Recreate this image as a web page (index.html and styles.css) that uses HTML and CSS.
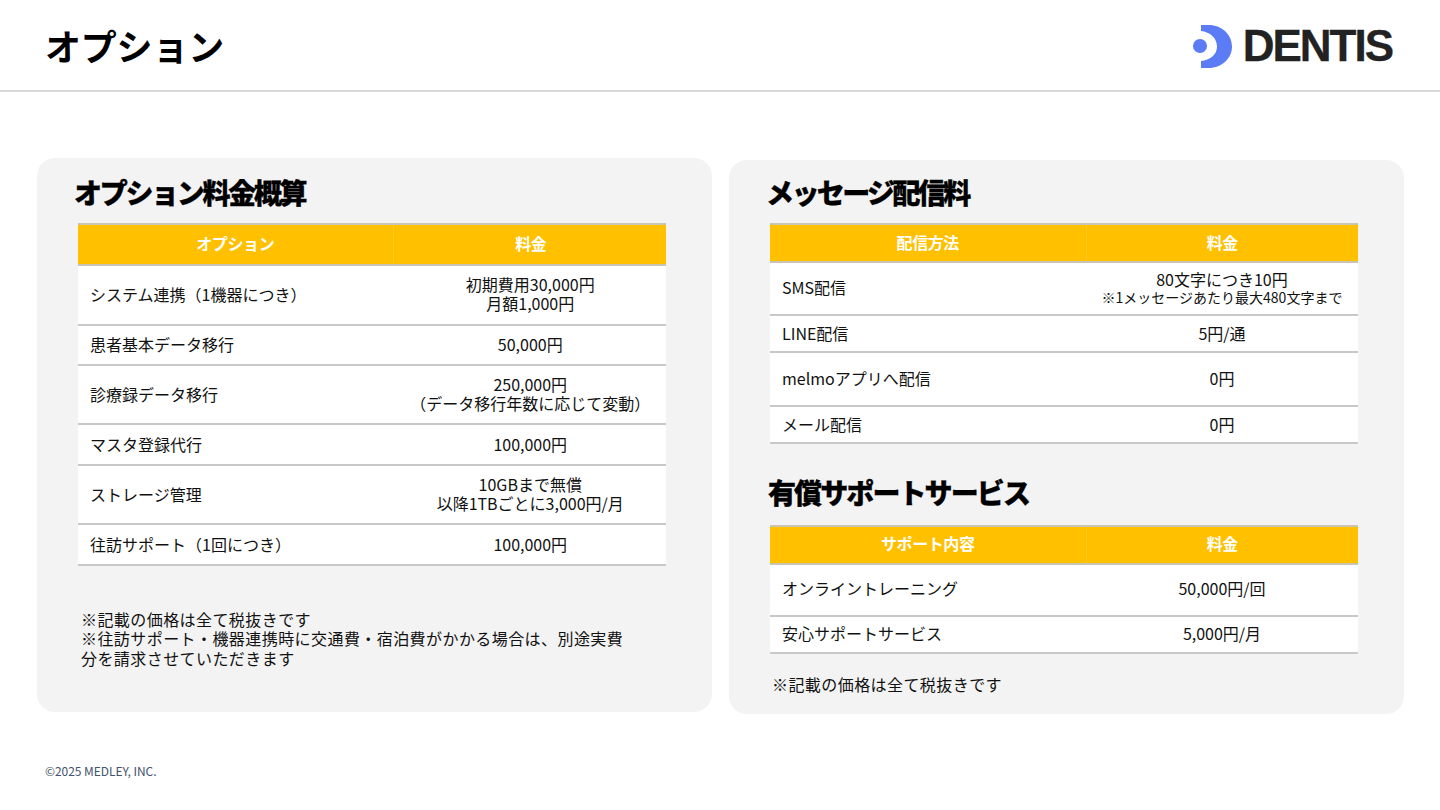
FILE: index.html
```html
<!DOCTYPE html>
<html lang="ja">
<head>
<meta charset="utf-8">
<title>オプション</title>
<link rel="stylesheet" href="styles.css">
</head>
<body>
<header class="top">
  <h1 class="page-title">オプション</h1>
  <div class="logo">
    <svg class="logo-mark" viewBox="0 0 42 44" width="42" height="44" aria-hidden="true">
      <circle cx="8" cy="22" r="7" fill="#5b7cf5"/>
      <path d="M9 1H17C29 1 40 10 40 22.500C40 35 29 44 17 44H9V37C18 36 25 31 25 22.500C25 14 18 8 9 7Z" fill="#5b7cf5"/>
    </svg>
    <span class="logo-text">DENTIS</span>
  </div>
</header>
<main class="panels">
  <section class="panel panel-left">
    <h2 class="panel-title title-left">オプション料金概算</h2>
    <table class="price price-left">
      <thead><tr class="h41"><th class="c1">オプション</th><th class="hc2">料金</th></tr></thead>
      <tbody>
        <tr class="h60"><td class="c1">システム連携（1機器につき）</td><td class="c2 two">初期費用30,000円<br>月額1,000円</td></tr>
        <tr class="h40"><td class="c1">患者基本データ移行</td><td class="c2">50,000円</td></tr>
        <tr class="h59"><td class="c1">診療録データ移行</td><td class="c2 two low">250,000円<br>（データ移行年数に応じて変動）</td></tr>
        <tr class="h41"><td class="c1">マスタ登録代行</td><td class="c2">100,000円</td></tr>
        <tr class="h59"><td class="c1">ストレージ管理</td><td class="c2 two low">10GBまで無償<br>以降1TBごとに3,000円/月</td></tr>
        <tr class="h41"><td class="c1">往訪サポート（1回につき）</td><td class="c2">100,000円</td></tr>
      </tbody>
    </table>
    <p class="note note-left">※記載の価格は全て税抜きです<br>※往訪サポート・機器連携時に交通費・宿泊費がかかる場合は、別途実費<br>分を請求させていただきます</p>
  </section>
  <section class="panel panel-right">
    <h2 class="panel-title title-right">メッセージ配信料</h2>
    <table class="price price-right">
      <thead><tr class="h38"><th class="c1r">配信方法</th><th class="hc2">料金</th></tr></thead>
      <tbody>
        <tr class="h53 sms"><td class="c1r">SMS配信</td><td class="c2">80文字につき10円<span class="small">※1メッセージあたり最大480文字まで</span></td></tr>
        <tr class="h37"><td class="c1r">LINE配信</td><td class="c2">5円/通</td></tr>
        <tr class="h54"><td class="c1r">melmoアプリへ配信</td><td class="c2">0円</td></tr>
        <tr class="h37"><td class="c1r">メール配信</td><td class="c2">0円</td></tr>
      </tbody>
    </table>
    <h2 class="panel-title title-second">有償サポートサービス</h2>
    <table class="price price-right second">
      <thead><tr class="h38"><th class="c1r">サポート内容</th><th class="hc2">料金</th></tr></thead>
      <tbody>
        <tr class="h52"><td class="c1r">オンライントレーニング</td><td class="c2">50,000円/回</td></tr>
        <tr class="h37"><td class="c1r">安心サポートサービス</td><td class="c2">5,000円/月</td></tr>
      </tbody>
    </table>
    <p class="note note-right">※記載の価格は全て税抜きです</p>
  </section>
</main>
<footer class="foot">©2025 MEDLEY, INC.</footer>
</body>
</html>
```
FILE: styles.css
```css
* { box-sizing: border-box; }
html, body { margin: 0; padding: 0; }
body {
  width: 1440px;
  height: 810px;
  overflow: hidden;
  background: #fff;
  color: #111;
  font-family: "Noto Sans CJK JP", "Noto Sans", sans-serif;
}
.top {
  height: 92px;
  border-bottom: 2px solid #d9d9d9;
  display: flex;
  align-items: flex-start;
  justify-content: space-between;
  padding: 0 48px 0 45px;
}
.page-title {
  margin: 19px 0 0;
  font-size: 36px;
  line-height: 52px;
  font-weight: 700;
  letter-spacing: -0.2px;
  color: #000;
}
.logo {
  display: flex;
  align-items: flex-start;
  margin: 24px 0 0;
}
.logo-mark { margin-right: 9px; }
.logo-text {
  font-family: "Liberation Sans", "Inter", sans-serif;
  font-weight: 700;
  font-size: 44px;
  line-height: 44px;
  letter-spacing: -2px;
  -webkit-text-stroke: 0.3px #222;
  color: #222;
}
.panels {
  display: flex;
  align-items: flex-start;
  gap: 17px;
  padding: 66px 36px 0 37px;
}
.panel {
  width: 675px;
  height: 554px;
  background: #f3f3f3;
  border-radius: 18px;
}
.panel-left { padding: 14px 46px 0 41px; }
.panel-right { margin-top: 2px; padding: 12px 46px 0 41px; }
.panel-title {
  margin: 0;
  font-size: 28px;
  line-height: 40px;
  font-weight: 900;
  color: #000;
  letter-spacing: -2.3px;
  -webkit-text-stroke: 0.3px #000;
}
.title-left { margin-left: -4px; }
.title-right { margin-left: -4px; letter-spacing: -2.6px; }
.title-second { margin: 28px 0 0 -2px; letter-spacing: -1.9px; }
.price {
  border-collapse: collapse;
  table-layout: fixed;
  background: #fff;
  margin-top: 11px;
  width: 588px;
  font-size: 16px;
  line-height: 20px;
}
.price.second { margin-top: 13px; }
.price th {
  background: #ffc000;
  color: #fff;
  font-weight: 700;
  font-size: 16px;
  letter-spacing: -0.4px;
  padding: 0 0 2px;
  border-top: 2px solid #c9c5b4;
  border-bottom: 2px solid #c9c5b4;
}
.price-left th, .second th { padding-bottom: 4px; }
.price .hc2 { border-left: 1px solid #ffc720; }
.price-left .hc2 { padding-left: 2px; }
.price td {
  padding: 0 0 2px;
  border-bottom: 2px solid #c8c8c8;
  font-weight: 400;
}
.price .sms td { padding-bottom: 4px; }
.second td { padding-bottom: 4px; }
.c1 { width: 315px; padding-left: 12px !important; }
.c1r { width: 316px; padding-left: 12px !important; }
.price th.c1, .price th.c1r { padding-left: 0 !important; }
.price td.c2 { text-align: center; }
.price-left td.c2 { padding-left: 1.5px; }
.price td.two { line-height: 19px; padding-bottom: 3px; }
.price td.low { padding-bottom: 1px; }
.small { display: block; font-size: 14px; line-height: 15px; margin-top: 1px; }
.h38 { height: 38px; }
.h37 { height: 37px; }
.h40 { height: 40px; }
.h41 { height: 41px; }
.h52 { height: 52px; }
.h53 { height: 53px; }
.h54 { height: 54px; }
.h59 { height: 59px; }
.h60 { height: 60px; }
.note {
  margin: 0;
  font-size: 16px;
  line-height: 19.6px;
  letter-spacing: 0.43px;
  color: #111;
}
.note-left { margin: 43.5px 0 0 3px; width: 560px; }
.note-right { margin: 21px 0 0 2px; }
.foot {
  position: absolute;
  left: 45px;
  top: 762px;
  font-size: 12px;
  line-height: 18px;
  letter-spacing: -0.05px;
  color: #44546a;
}
```
